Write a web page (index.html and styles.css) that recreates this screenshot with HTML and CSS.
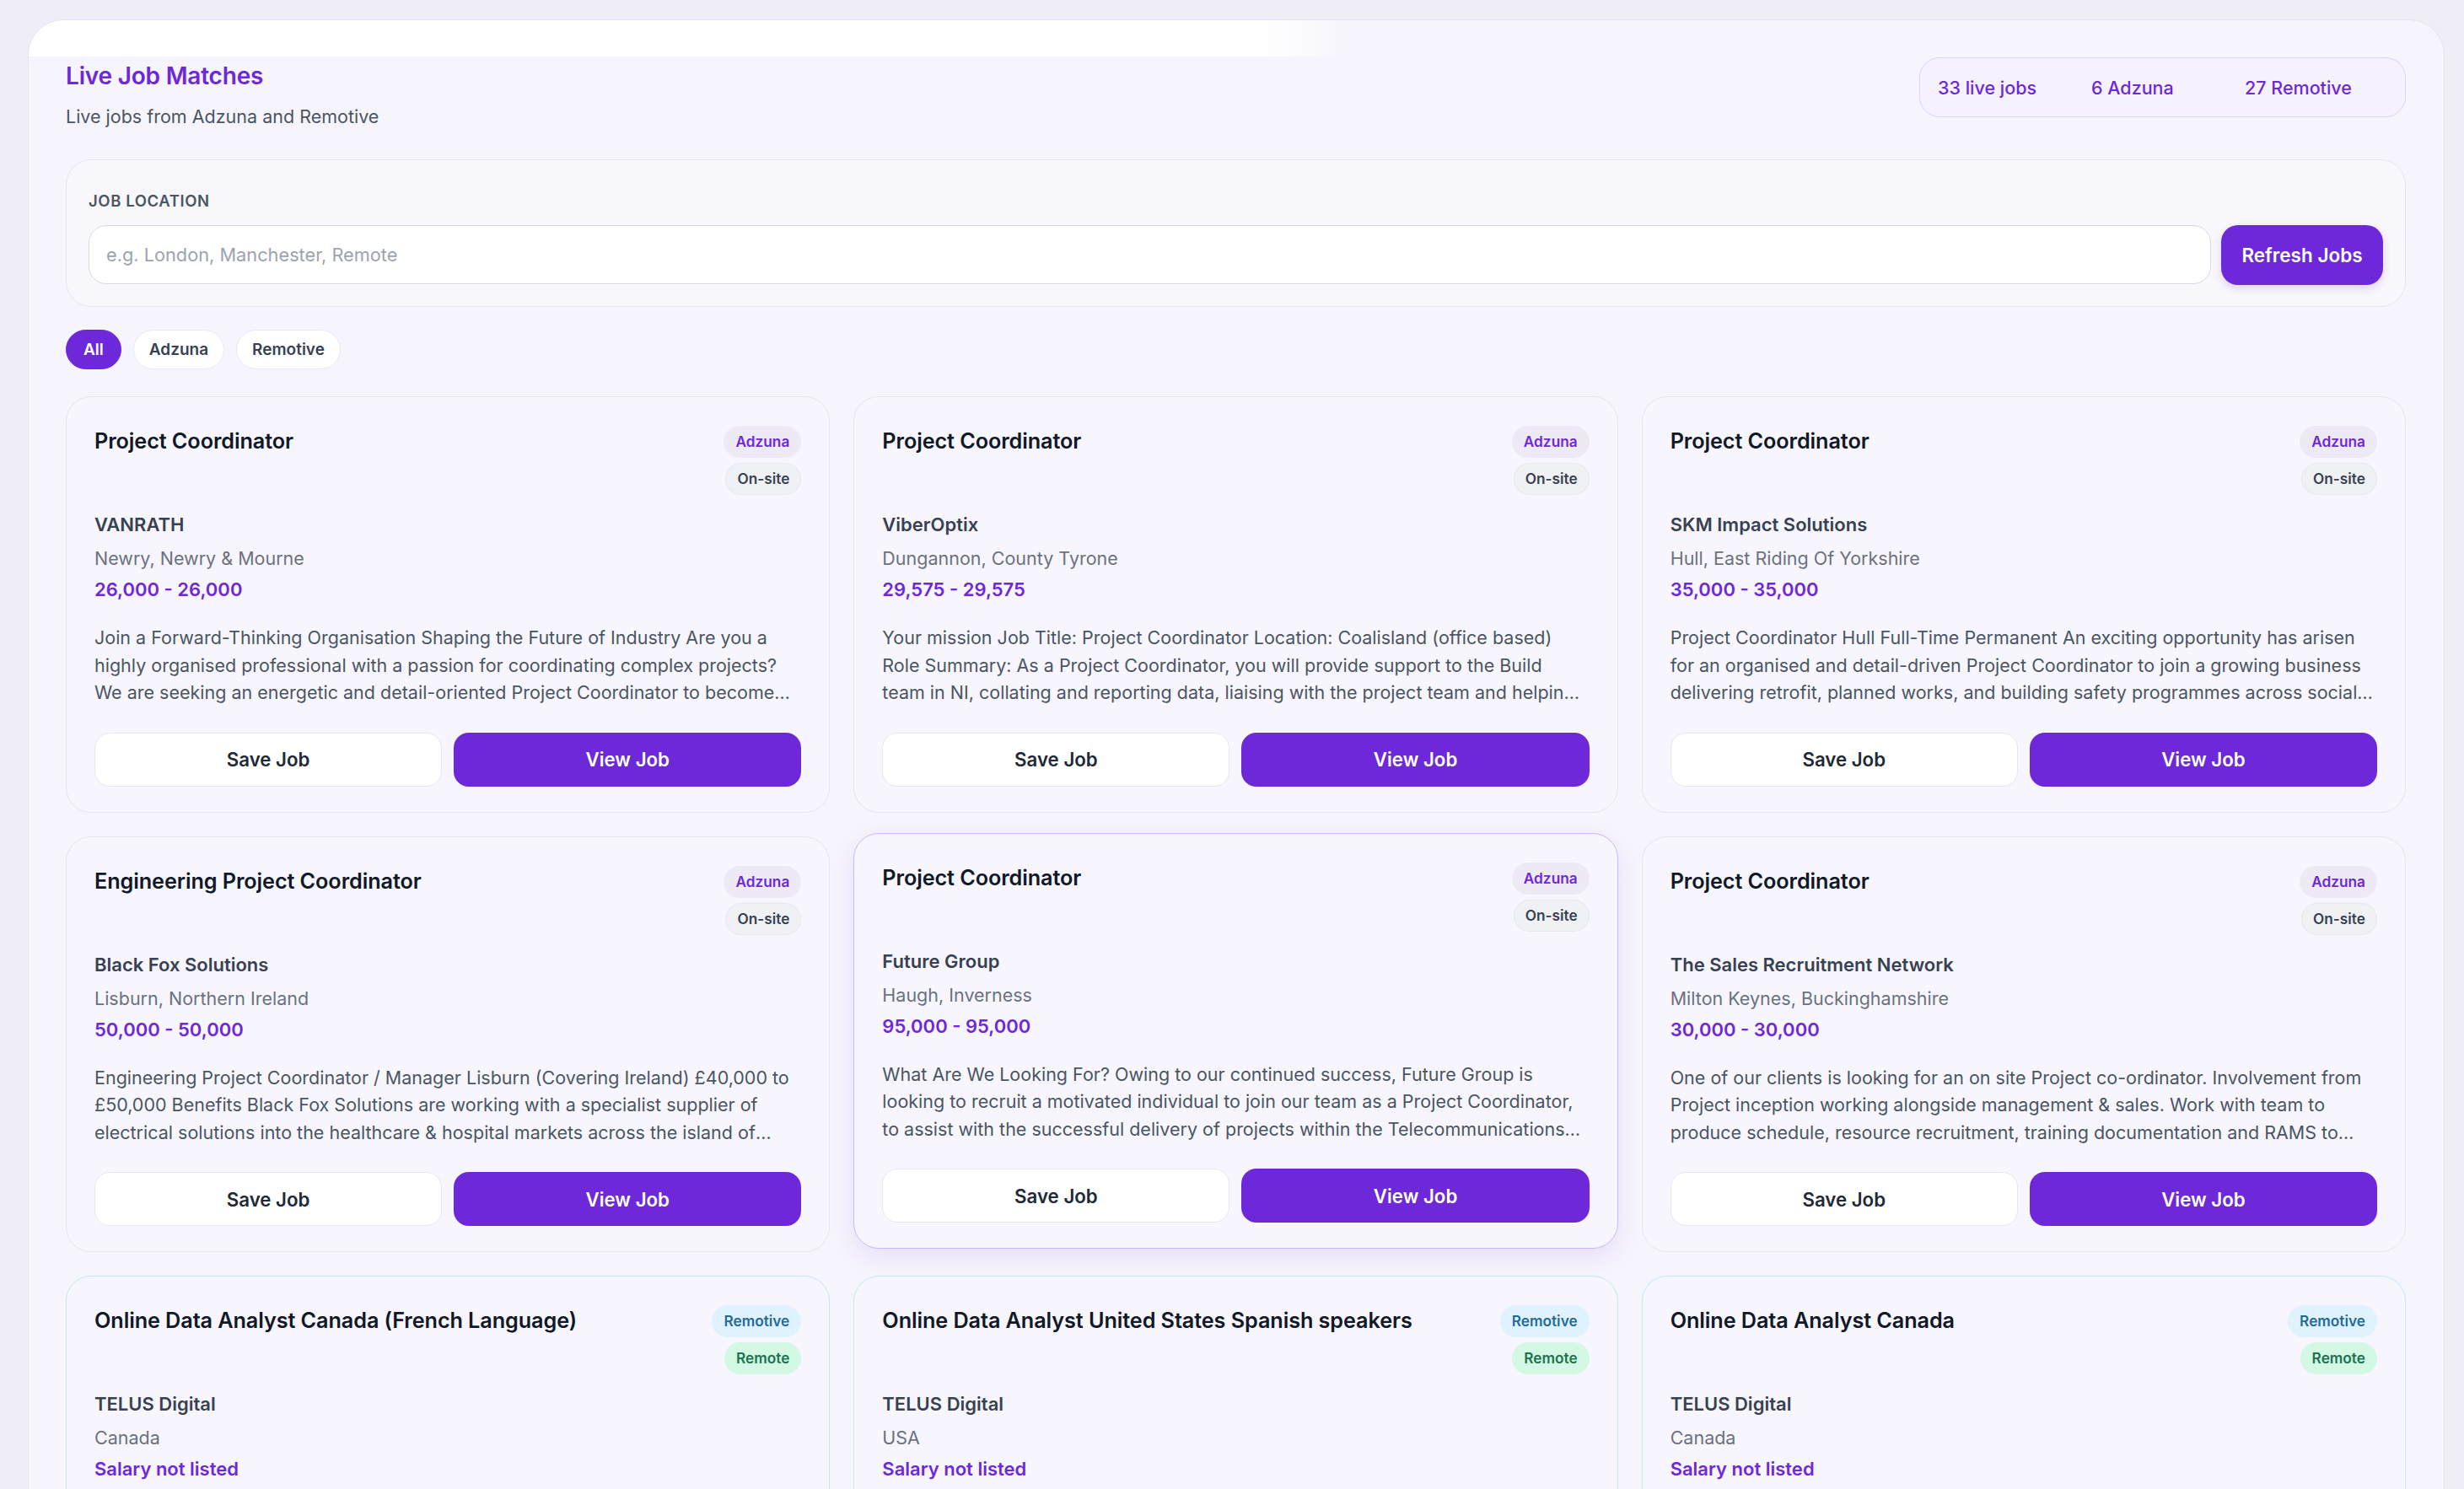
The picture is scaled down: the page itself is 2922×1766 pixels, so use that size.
FILE: index.html
```html
<!DOCTYPE html>
<html lang="en">
<head>
<meta charset="utf-8">
<title>Live Job Matches</title>
<link rel="stylesheet" href="styles.css">
</head>
<body>
<div class="page">
  <section class="panel">
    <header class="panel-head">
      <div class="head-text">
        <h1 class="title">Live Job Matches</h1>
        <p class="subtitle">Live jobs from Adzuna and Remotive</p>
      </div>
      <div class="stats">
        <span class="stat">33 live jobs</span>
        <span class="stat">6 Adzuna</span>
        <span class="stat">27 Remotive</span>
      </div>
    </header>

    <div class="search-card">
      <label class="search-label" for="loc">JOB LOCATION</label>
      <div class="search-row">
        <input id="loc" class="search-input" type="text" placeholder="e.g. London, Manchester, Remote">
        <button class="btn-refresh">Refresh Jobs</button>
      </div>
    </div>

    <div class="filters">
      <button class="chip chip-active">All</button>
      <button class="chip">Adzuna</button>
      <button class="chip">Remotive</button>
    </div>

    <div class="grid">
      <article class="card">
        <div class="card-head">
          <h2 class="card-title">Project Coordinator</h2>
          <div class="badges"><span class="badge badge-adzuna">Adzuna</span><span class="badge badge-onsite">On-site</span></div>
        </div>
        <div class="company">VANRATH</div>
        <div class="location">Newry, Newry &amp; Mourne</div>
        <div class="salary">26,000 - 26,000</div>
        <p class="desc">Join a Forward-Thinking Organisation Shaping the Future of Industry Are you a highly organised professional with a passion for coordinating complex projects? We are seeking an energetic and detail-oriented Project Coordinator to become part of a dynamic team delivering innovative solutions.</p>
        <div class="actions"><button class="btn-save">Save Job</button><button class="btn-view">View Job</button></div>
      </article>

      <article class="card">
        <div class="card-head">
          <h2 class="card-title">Project Coordinator</h2>
          <div class="badges"><span class="badge badge-adzuna">Adzuna</span><span class="badge badge-onsite">On-site</span></div>
        </div>
        <div class="company">ViberOptix</div>
        <div class="location">Dungannon, County Tyrone</div>
        <div class="salary">29,575 - 29,575</div>
        <p class="desc">Your mission Job Title: Project Coordinator Location: Coalisland (office based) Role Summary: As a Project Coordinator, you will provide support to the Build team in NI, collating and reporting data, liaising with the project team and helping to drive delivery.</p>
        <div class="actions"><button class="btn-save">Save Job</button><button class="btn-view">View Job</button></div>
      </article>

      <article class="card">
        <div class="card-head">
          <h2 class="card-title">Project Coordinator</h2>
          <div class="badges"><span class="badge badge-adzuna">Adzuna</span><span class="badge badge-onsite">On-site</span></div>
        </div>
        <div class="company">SKM Impact Solutions</div>
        <div class="location">Hull, East Riding Of Yorkshire</div>
        <div class="salary">35,000 - 35,000</div>
        <p class="desc">Project Coordinator Hull Full-Time Permanent An exciting opportunity has arisen for an organised and detail-driven Project Coordinator to join a growing business delivering retrofit, planned works, and building safety programmes across social housing.</p>
        <div class="actions"><button class="btn-save">Save Job</button><button class="btn-view">View Job</button></div>
      </article>

      <article class="card">
        <div class="card-head">
          <h2 class="card-title">Engineering Project Coordinator</h2>
          <div class="badges"><span class="badge badge-adzuna">Adzuna</span><span class="badge badge-onsite">On-site</span></div>
        </div>
        <div class="company">Black Fox Solutions</div>
        <div class="location">Lisburn, Northern Ireland</div>
        <div class="salary">50,000 - 50,000</div>
        <p class="desc">Engineering Project Coordinator / Manager Lisburn (Covering Ireland) £40,000 to £50,000 Benefits Black Fox Solutions are working with a specialist supplier of electrical solutions into the healthcare &amp; hospital markets across the island of Ireland.</p>
        <div class="actions"><button class="btn-save">Save Job</button><button class="btn-view">View Job</button></div>
      </article>

      <article class="card card-hover">
        <div class="card-head">
          <h2 class="card-title">Project Coordinator</h2>
          <div class="badges"><span class="badge badge-adzuna">Adzuna</span><span class="badge badge-onsite">On-site</span></div>
        </div>
        <div class="company">Future Group</div>
        <div class="location">Haugh, Inverness</div>
        <div class="salary">95,000 - 95,000</div>
        <p class="desc">What Are We Looking For? Owing to our continued success, Future Group is looking to recruit a motivated individual to join our team as a Project Coordinator, to assist with the successful delivery of projects within the Telecommunications sector.</p>
        <div class="actions"><button class="btn-save">Save Job</button><button class="btn-view">View Job</button></div>
      </article>

      <article class="card">
        <div class="card-head">
          <h2 class="card-title">Project Coordinator</h2>
          <div class="badges"><span class="badge badge-adzuna">Adzuna</span><span class="badge badge-onsite">On-site</span></div>
        </div>
        <div class="company">The Sales Recruitment Network</div>
        <div class="location">Milton Keynes, Buckinghamshire</div>
        <div class="salary">30,000 - 30,000</div>
        <p class="desc">One of our clients is looking for an on site Project co-ordinator. Involvement from Project inception working alongside management &amp; sales. Work with team to produce schedule, resource recruitment, training documentation and RAMS to subcontractors.</p>
        <div class="actions"><button class="btn-save">Save Job</button><button class="btn-view">View Job</button></div>
      </article>

      <article class="card card-remote">
        <div class="card-head">
          <h2 class="card-title">Online Data Analyst Canada (French Language)</h2>
          <div class="badges"><span class="badge badge-remotive">Remotive</span><span class="badge badge-remote">Remote</span></div>
        </div>
        <div class="company">TELUS Digital</div>
        <div class="location">Canada</div>
        <div class="salary">Salary not listed</div>
        <p class="desc">Are you a detail-oriented individual with a passion for research and a good understanding of national and local geography? This freelance opportunity allows you to work at your own pace and from the comfort of your own home.</p>
        <div class="actions"><button class="btn-save">Save Job</button><button class="btn-view">View Job</button></div>
      </article>

      <article class="card card-remote">
        <div class="card-head">
          <h2 class="card-title">Online Data Analyst United States Spanish speakers</h2>
          <div class="badges"><span class="badge badge-remotive">Remotive</span><span class="badge badge-remote">Remote</span></div>
        </div>
        <div class="company">TELUS Digital</div>
        <div class="location">USA</div>
        <div class="salary">Salary not listed</div>
        <p class="desc">Are you a detail-oriented individual with a passion for research and a good understanding of national and local geography? This freelance opportunity allows you to work at your own pace and from the comfort of your own home.</p>
        <div class="actions"><button class="btn-save">Save Job</button><button class="btn-view">View Job</button></div>
      </article>

      <article class="card card-remote">
        <div class="card-head">
          <h2 class="card-title">Online Data Analyst Canada</h2>
          <div class="badges"><span class="badge badge-remotive">Remotive</span><span class="badge badge-remote">Remote</span></div>
        </div>
        <div class="company">TELUS Digital</div>
        <div class="location">Canada</div>
        <div class="salary">Salary not listed</div>
        <p class="desc">Are you a detail-oriented individual with a passion for research and a good understanding of national and local geography? This freelance opportunity allows you to work at your own pace and from the comfort of your own home.</p>
        <div class="actions"><button class="btn-save">Save Job</button><button class="btn-view">View Job</button></div>
      </article>
    </div>
  </section>
</div>
</body>
</html>
```

FILE: styles.css
```css
* { box-sizing: border-box; }

html, body {
  margin: 0;
  height: 100%;
  overflow: hidden;
}

body {
  font-family: Inter, "Noto Sans", "Liberation Sans", sans-serif;
  background: #efedf6;
  color: #111827;
}

.page {
  padding: 23px 23px 0 33px;
}

.panel {
  background-color: #f6f4fc;
  background-image: linear-gradient(to right, #ffffff 0%, #ffffff 51%, rgba(255,255,255,0) 55%);
  background-size: 100% 43px;
  background-repeat: no-repeat;
  border: 1px solid #e7e2f5;
  border-radius: 42px;
  padding: 44px 45px 60px 44px;
  min-height: 1800px;
}

.panel-head {
  display: flex;
  justify-content: space-between;
  align-items: flex-start;
  margin-bottom: 37px;
}

.title {
  margin: 4px 0 0;
  font-size: 28px;
  line-height: 36px;
  font-weight: 600;
  color: #6d28d9;
  letter-spacing: -0.2px;
}

.subtitle {
  margin: 16px 0 0;
  font-size: 21.5px;
  line-height: 28px;
  color: #4b5563;
}

.stats {
  display: flex;
  align-items: center;
  height: 71px;
  padding: 0 8px 0 21px;
  border: 1px solid #ddd3fb;
  border-radius: 24px;
  background: #f5f2fe;
}

.stat {
  width: 182px;
  font-size: 21.5px;
  font-weight: 500;
  color: #6d28d9;
}

.search-card {
  background: #f8f7fb;
  border: 1px solid #e9e6f1;
  border-radius: 30px;
  padding: 36px 26px 25px;
}

.search-label {
  display: block;
  font-size: 18.5px;
  line-height: 24px;
  font-weight: 600;
  color: #4b5563;
  letter-spacing: 0.6px;
  margin-bottom: 17px;
}

.search-row {
  display: flex;
  gap: 12px;
}

.search-input {
  flex: 1;
  height: 70px;
  border: 1.5px solid #dad7e4;
  border-radius: 21px;
  background: #ffffff;
  padding: 0 20px;
  font-family: inherit;
  font-size: 21.75px;
  color: #111827;
  outline: none;
}

.search-input::placeholder { color: #9ca3af; }

.btn-refresh {
  width: 192px;
  height: 71px;
  border: none;
  border-radius: 20px;
  background: #6d28d9;
  color: #ffffff;
  font-family: inherit;
  font-size: 22.5px;
  font-weight: 600;
  box-shadow: 0 4px 10px rgba(109, 40, 217, 0.18);
}

.filters {
  display: flex;
  gap: 14px;
  margin-top: 27px;
  margin-bottom: 32px;
}

.chip {
  height: 47px;
  padding: 0 18px;
  border: 1.5px solid #ebe8f2;
  border-radius: 24px;
  background: #ffffff;
  color: #374151;
  font-family: inherit;
  font-size: 19px;
  font-weight: 600;
}

.chip-active {
  background: #6d28d9;
  border-color: #6d28d9;
  color: #ffffff;
  padding: 0 20px;
}

.grid {
  display: grid;
  grid-template-columns: repeat(3, 1fr);
  gap: 28px;
}

.card {
  display: flex;
  flex-direction: column;
  background: #f7f5fd;
  border: 1.5px solid #e8e4f3;
  border-radius: 30px;
  padding: 34px 33px 30px;
}

.card-hover {
  transform: translateY(-4px);
  border-color: #cbb8fb;
  box-shadow: 0 10px 28px rgba(109, 40, 217, 0.10);
}

.card-remote {
  border-color: #c6e6fb;
}

.card-head {
  display: flex;
  justify-content: space-between;
  align-items: flex-start;
  gap: 16px;
}

.card-title {
  margin: 0;
  font-size: 25.25px;
  line-height: 36px;
  font-weight: 600;
  color: #111827;
  letter-spacing: -0.1px;
}

.badges {
  display: flex;
  flex-direction: column;
  align-items: flex-end;
  gap: 6px;
  flex-shrink: 0;
}

.badge {
  height: 38px;
  line-height: 38px;
  padding: 0 14px;
  border-radius: 19px;
  font-size: 17.25px;
  font-weight: 600;
}

.badge-adzuna {
  background: #edeaf6;
  color: #6d28d9;
}

.badge-onsite {
  background: #eff1f4;
  color: #374151;
  box-shadow: inset 0 0 0 1px #e7e9ee;
}

.badge-remotive {
  background: #dff2fd;
  color: #1f6b9a;
}

.badge-remote {
  background: #d3f8e4;
  color: #1b7350;
}

.company {
  margin-top: 20px;
  font-size: 22px;
  line-height: 30px;
  font-weight: 600;
  color: #374151;
}

.location {
  margin-top: 10px;
  font-size: 21.5px;
  line-height: 30px;
  color: #6b7280;
}

.salary {
  margin-top: 7px;
  font-size: 22px;
  line-height: 30px;
  font-weight: 600;
  color: #6d28d9;
}

.desc {
  margin: 26px 0 0;
  font-size: 21.5px;
  line-height: 32.5px;
  color: #4b5563;
  display: -webkit-box;
  -webkit-line-clamp: 3;
  -webkit-box-orient: vertical;
  overflow: hidden;
}

.actions {
  display: grid;
  grid-template-columns: 1fr 1fr;
  gap: 14px;
  margin-top: auto;
  padding-top: 31px;
}

.btn-save,
.btn-view {
  height: 64px;
  border-radius: 18px;
  font-family: inherit;
  font-size: 22.25px;
  font-weight: 600;
}

.btn-save {
  background: #ffffff;
  border: 1.5px solid #e8e6ef;
  color: #1f2937;
}

.btn-view {
  background: #6d28d9;
  border: none;
  color: #ffffff;
}
```
